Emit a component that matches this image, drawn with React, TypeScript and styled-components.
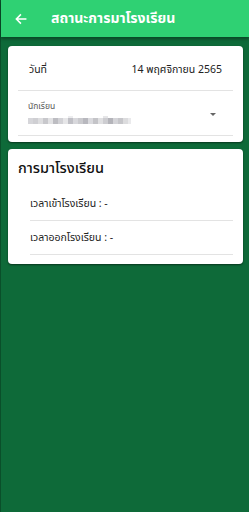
import React from "react";
import styled, { createGlobalStyle } from "styled-components";

const GlobalStyle = createGlobalStyle`
  html, body {
    margin: 0;
    padding: 0;
    height: 100%;
  }
  body {
    font-family: "Noto Sans Thai", "Noto Sans", "DejaVu Sans", sans-serif;
    background: #0e6a39;
  }
  #root {
    height: 100%;
  }
`;

const Page = styled.div`
  min-height: 512px;
  background: #0e6a39;
  border-left: 1px solid #0a4f2a;
  box-sizing: border-box;
  display: flex;
  flex-direction: column;
`;

const TopBar = styled.header`
  height: 37px;
  background: #2fd173;
  display: flex;
  align-items: center;
  padding-left: 13px;
  gap: 23px;
  box-shadow: 0 2px 3px rgba(0, 0, 0, 0.35);
  position: relative;
  z-index: 1;
`;

const BackButton = styled.button`
  border: 0;
  background: none;
  padding: 0;
  width: 14px;
  height: 14px;
  display: flex;
  color: #ffffff;
`;

const TopTitle = styled.h1`
  margin: 0;
  font-size: 14px;
  font-weight: 700;
  color: #ffffff;
  line-height: 1;
`;

const Body = styled.main`
  display: flex;
  flex-direction: column;
  gap: 7px;
  padding: 9px 6px 0 7px;
`;

const Card = styled.section<{ $pad: string }>`
  background: #ffffff;
  border-radius: 4px;
  box-shadow: 0 1px 2px rgba(0, 0, 0, 0.5);
  padding: ${(p) => p.$pad};
`;

const InfoRow = styled.div`
  display: flex;
  justify-content: space-between;
  align-items: center;
  height: 41px;
  padding: 0 11px 0 11px;
  border-bottom: 1px solid #e3e3e3;
  font-size: 10.5px;
  color: #222;
`;

const SelectField = styled.div`
  display: flex;
  align-items: center;
  justify-content: space-between;
  height: 44px;
  padding: 0 17px 0 10px;
  border-bottom: 1px solid #e3e3e3;
`;

const FieldStack = styled.div`
  display: flex;
  flex-direction: column;
  gap: 5px;
  padding-top: 2px;
`;

const FieldLabel = styled.span`
  font-size: 8.5px;
  color: #555;
  line-height: 1;
`;

const Caret = styled.span`
  width: 0;
  height: 0;
  border-left: 3.5px solid transparent;
  border-right: 3.5px solid transparent;
  border-top: 3.5px solid #666;
  margin-top: 2px;
`;

const CardTitle = styled.h2`
  margin: 0 0 8px 0;
  font-size: 14.5px;
  font-weight: 500;
  line-height: 20px;
  color: #111;
`;

const TimeRow = styled.div`
  height: 33px;
  display: flex;
  align-items: center;
  margin-left: 12px;
  border-bottom: 1px solid #e3e3e3;
  font-size: 10.5px;
  color: #222;
`;

const blurCols = [
  "#d6d6da", "#cfcfd3", "#dedee0", "#c8c8cc", "#e2e2e4", "#bdbdc2", "#d2d2d6",
  "#e6e6e8", "#c0c0c6", "#d8d8dc", "#cacace", "#b8b8be", "#dadade", "#c4c4c8",
  "#e0e0e2", "#cdcdd1", "#b4b4ba", "#d4d4d8", "#c6c6ca", "#dcdcde", "#eaeaec",
];

const BlurredName = () => (
  <svg width="103" height="9" viewBox="0 0 103 9">
    {blurCols.map((c, i) => (
      <rect key={i} x={i * 5} y={2} width={5} height={6} fill={c} />
    ))}
    <rect x={40} y={0} width={5} height={2} fill="#ececee" />
    <rect x={75} y={0} width={5} height={2} fill="#e6e6e8" />
  </svg>
);

const ArrowLeft = () => (
  <svg width="14" height="14" viewBox="0 0 24 24" fill="none">
    <path
      d="M20 12H5M11 5l-7 7 7 7"
      stroke="currentColor"
      strokeWidth="2.6"
      strokeLinecap="square"
    />
  </svg>
);

const App = () => (
  <>
    <GlobalStyle />
    <Page>
      <TopBar>
        <BackButton>
          <ArrowLeft />
        </BackButton>
        <TopTitle>สถานะการมาโรงเรียน</TopTitle>
      </TopBar>
      <Body>
        <Card $pad="3px 10px 6px 10px">
          <InfoRow>
            <span>วันที่</span>
            <span>14 พฤศจิกายน 2565</span>
          </InfoRow>
          <SelectField>
            <FieldStack>
              <FieldLabel>นักเรียน</FieldLabel>
              <BlurredName />
            </FieldStack>
            <Caret />
          </SelectField>
        </Card>
        <Card $pad="10px 10px 9px 10px">
          <CardTitle>การมาโรงเรียน</CardTitle>
          <TimeRow>เวลาเข้าโรงเรียน : -</TimeRow>
          <TimeRow>เวลาออกโรงเรียน : -</TimeRow>
        </Card>
      </Body>
    </Page>
  </>
);

export default App;
